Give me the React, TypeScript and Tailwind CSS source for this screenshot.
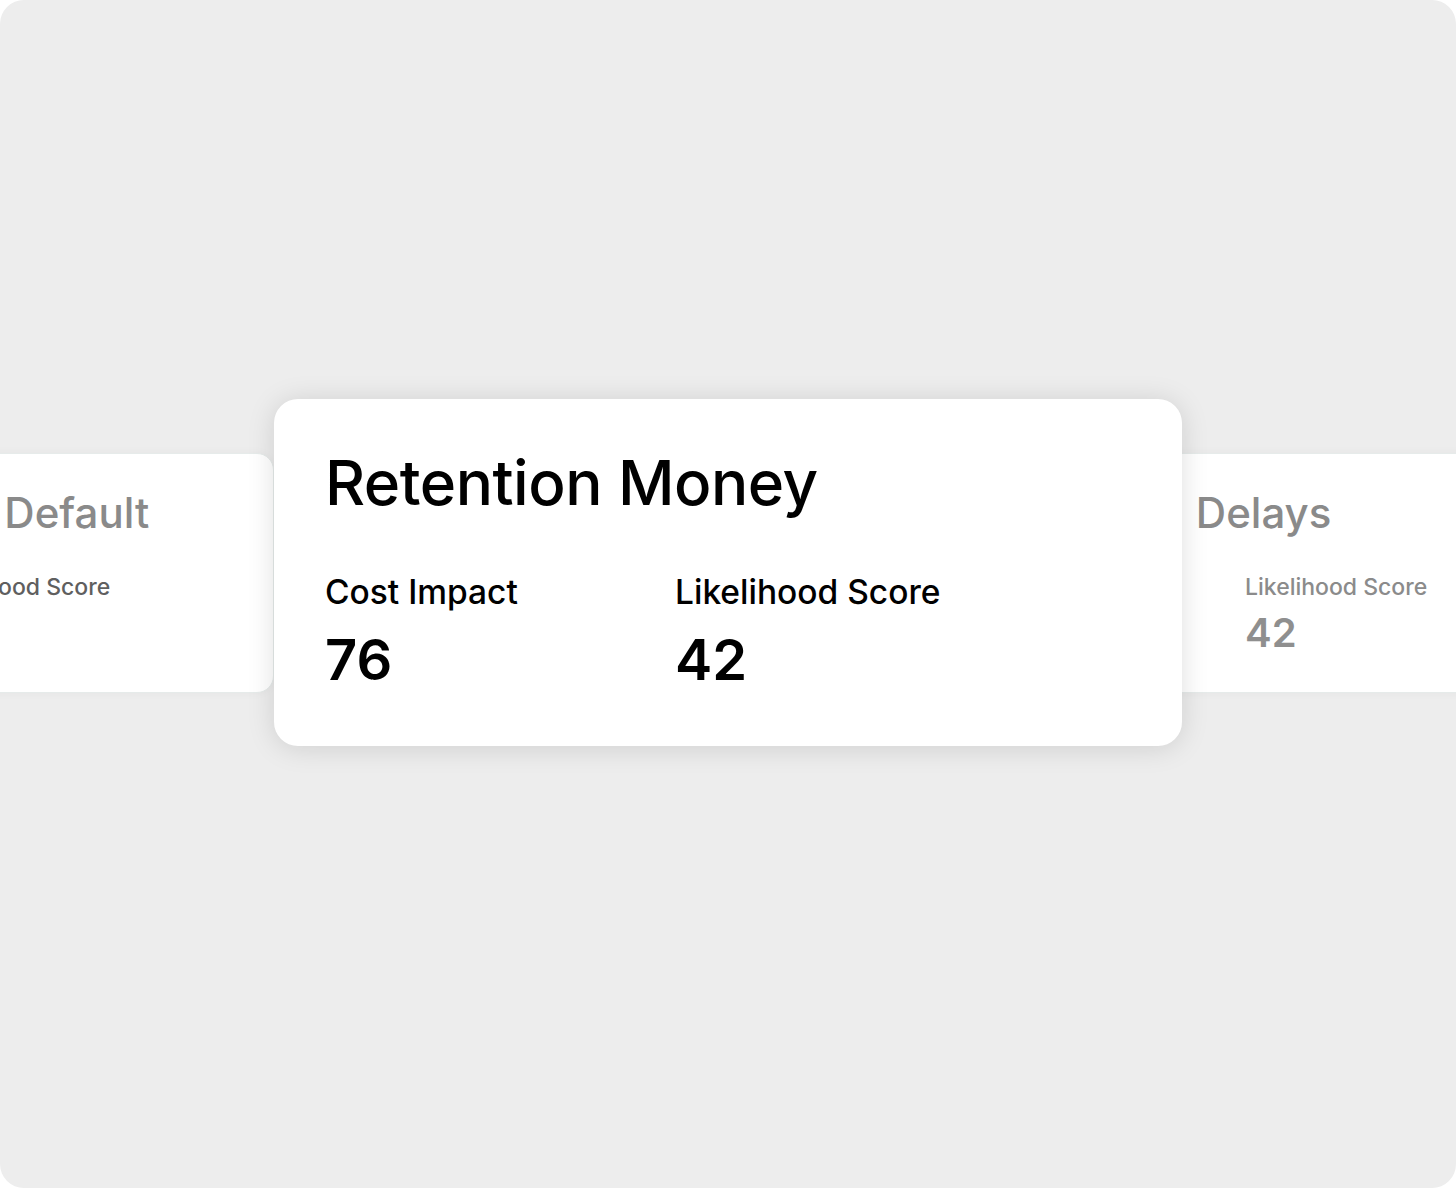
import React from "react";

type Risk = {
  title: string;
  cost: number;
  likelihood: number;
};

const risks: Risk[] = [
  { title: "Subcontractor Default", cost: 64, likelihood: 38 },
  { title: "Retention Money", cost: 76, likelihood: 42 },
  { title: "Payment Delays", cost: 58, likelihood: 42 },
];

function SideCard({ risk, tone }: { risk: Risk; tone: "left" | "right" }) {
  const labelColor = tone === "left" ? "text-[#5f5f5f]" : "text-[#8b8b8b]";
  return (
    <div className="w-[634px] h-[240px] shrink-0 rounded-[17px] bg-white border border-[#e6ebea] shadow-[0_0_10px_rgba(0,0,0,0.04)] pl-[36px] pt-[38px]">
      <h3
        className={`text-[42px] leading-none font-medium text-[#8a8a8a] whitespace-nowrap ${
          tone === "left" ? "ml-[29px]" : "ml-[-5px] [word-spacing:14px]"
        }`}
      >
        {risk.title}
      </h3>
      <div className="flex mt-[42px]">
        <div className={tone === "left" ? "w-[251px]" : "w-[245px]"}>
          <div className={`text-[23px] leading-none font-medium ${labelColor}`}>Cost Impact</div>
          <div className="text-[40px] leading-none font-semibold text-[#8f8f8f] mt-[14px]">{risk.cost}</div>
        </div>
        <div>
          <div className={`text-[23px] leading-none font-medium ${labelColor}`}>Likelihood Score</div>
          <div className="text-[40px] leading-none font-semibold text-[#8f8f8f] mt-[14px]">{risk.likelihood}</div>
        </div>
      </div>
    </div>
  );
}

export default function App() {
  const [prev, current, next] = risks;

  return (
    <div className="w-[1456px] h-[1188px] bg-white font-['Inter','Liberation_Sans',sans-serif]">
      <div className="h-full rounded-[24px] bg-[#ededed] overflow-hidden pt-[399px]">
        {/* carousel row: side cards sit behind the active one */}
        <div className="flex items-center ml-[-360px]">
          <SideCard risk={prev} tone="left" />

          <div className="relative z-10 w-[908px] h-[347px] shrink-0 rounded-[24px] bg-white shadow-[0_2px_28px_rgba(0,0,0,0.13)] pl-[51px] pt-[53px]">
            <h2 className="text-[62px] leading-none font-medium text-black tracking-[-0.5px]">{current.title}</h2>
            <div className="flex mt-[62px]">
              <div className="w-[350px]">
                <div className="text-[33.5px] leading-none font-medium text-black">Cost Impact</div>
                <div className="text-[56px] leading-none font-semibold text-black mt-[22px]">{current.cost}</div>
              </div>
              <div>
                <div className="text-[33.5px] leading-none font-medium text-black">Likelihood Score</div>
                <div className="text-[56px] leading-none font-semibold text-black mt-[22px]">{current.likelihood}</div>
              </div>
            </div>
          </div>

          <div className="ml-[-219px]">
            <SideCard risk={next} tone="right" />
          </div>
        </div>
      </div>
    </div>
  );
}
